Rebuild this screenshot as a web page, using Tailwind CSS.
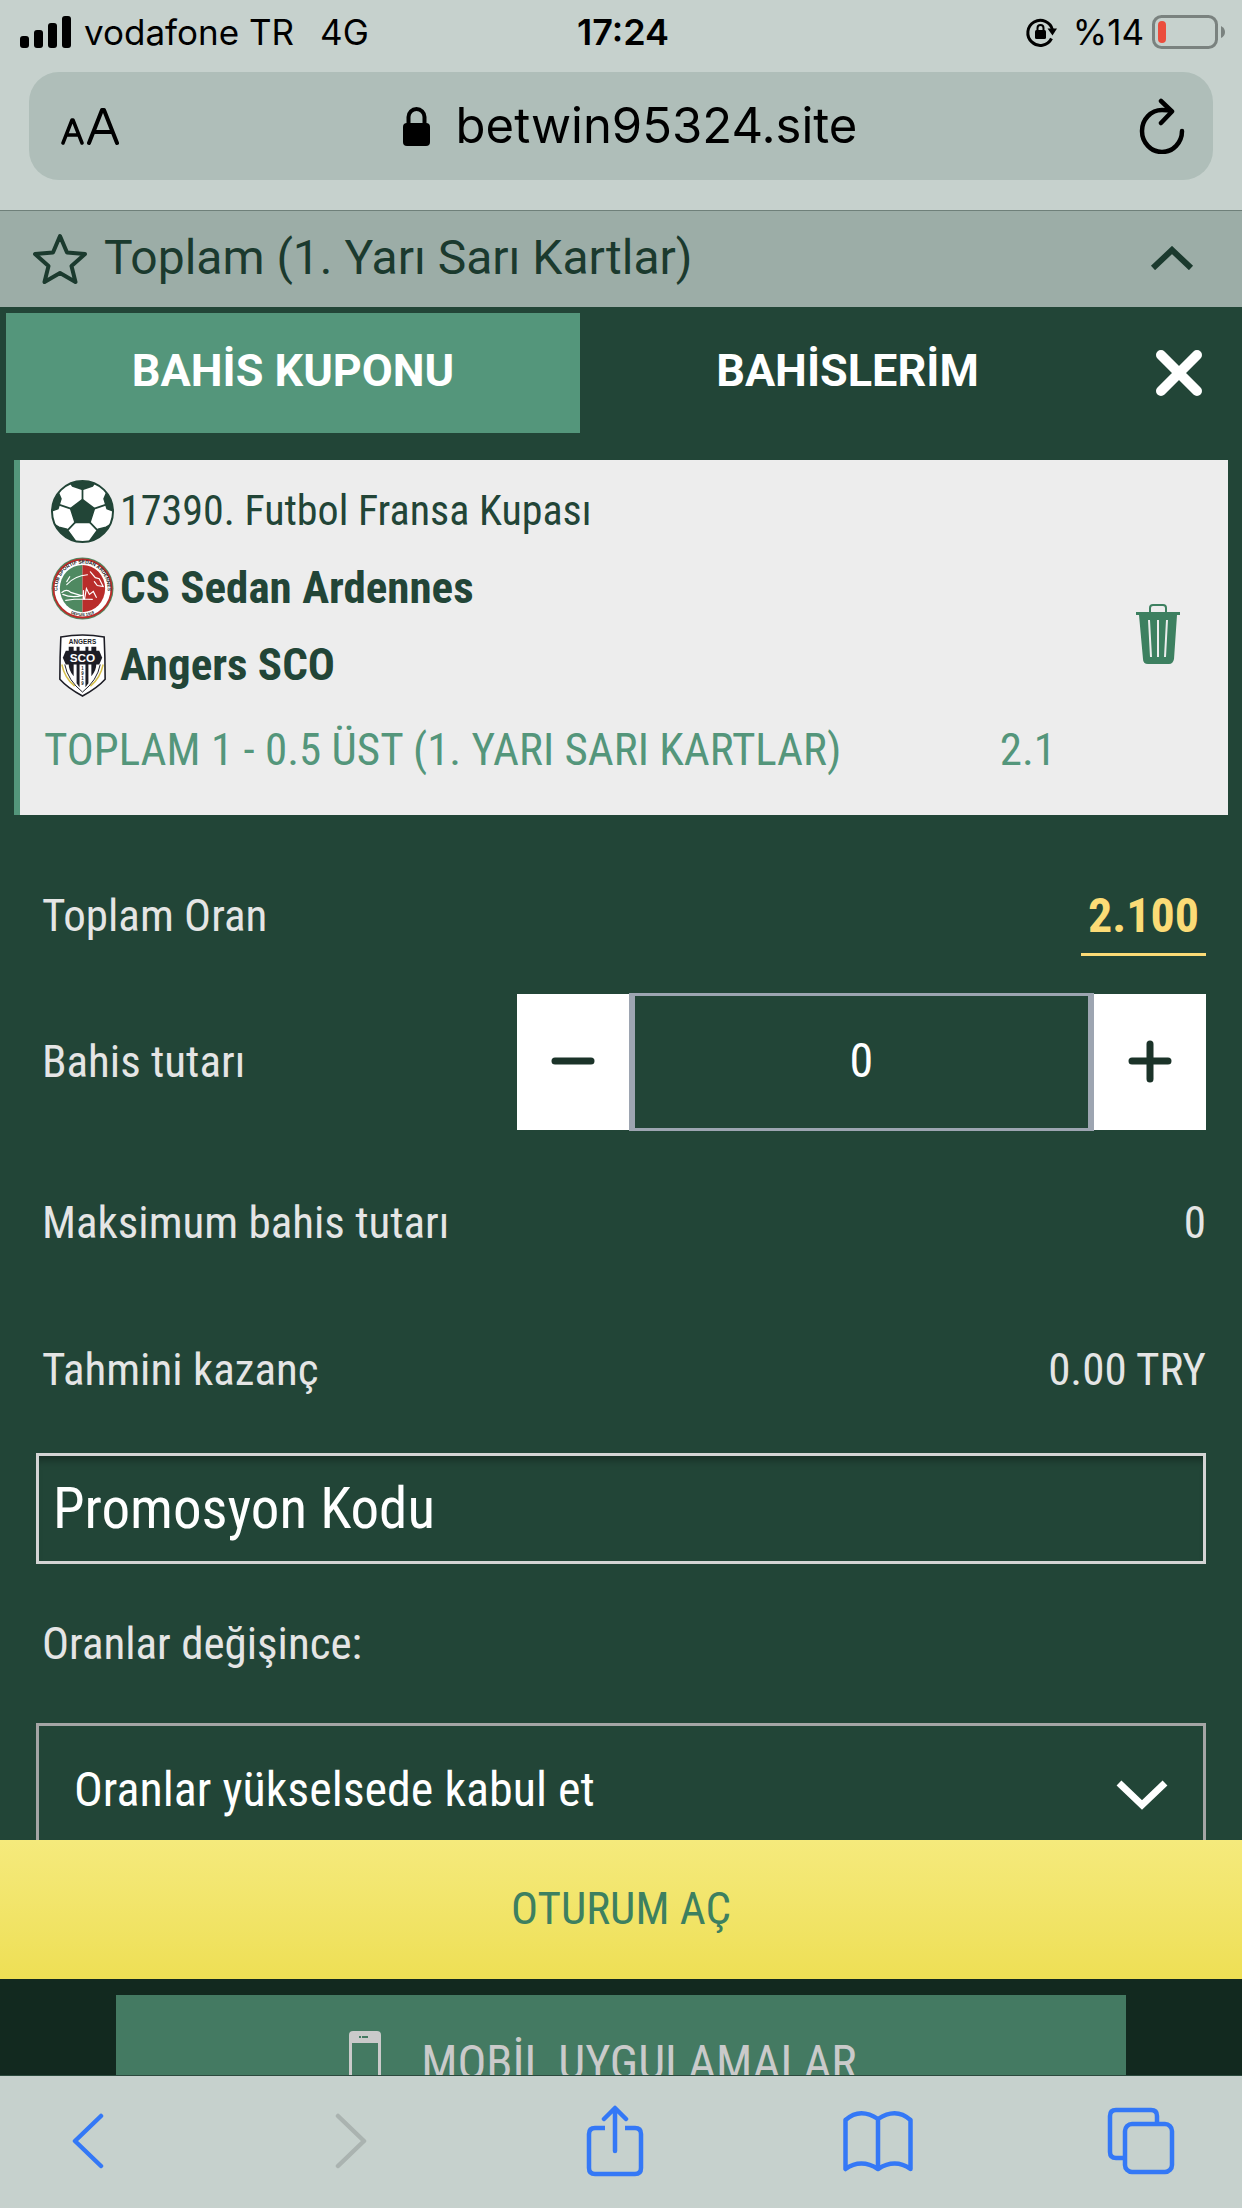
<!DOCTYPE html>
<html lang="tr">
<head>
<meta charset="utf-8">
<meta name="viewport" content="width=device-width, initial-scale=1">
<title>Bahis Kuponu</title>
<script src="https://cdn.jsdelivr.net/npm/@tailwindcss/browser@4"></script>
</head>
<body class="flex h-screen flex-col overflow-hidden bg-[#12291f] font-['Roboto_Condensed','Roboto',sans-serif] text-[45px] leading-[60px]">

<!-- Browser chrome: status and address bar -->
<header class="shrink-0 border-b border-[#6f807a] bg-[#c6d1cd] font-['Inter',sans-serif] text-black">
  <div class="grid h-[72px] grid-cols-3 items-center pr-4 pl-5 pb-2 text-[35px] leading-[44px]">
    <div class="flex items-center gap-[12px] whitespace-nowrap">
      <svg class="h-8 w-[52px]" viewBox="0 0 52 32" aria-hidden="true"><rect y="20" width="9" height="12" rx="3"/><rect x="14" y="14" width="9" height="18" rx="3"/><rect x="28" y="7" width="9" height="25" rx="3"/><rect x="42" width="9" height="32" rx="3"/></svg>
      <span>vodafone TR</span><span class="pl-[14px]">4G</span>
    </div>
    <time class="text-center text-[36px] font-semibold">17:24</time>
    <div class="flex items-center justify-end">
      <svg class="mr-4 h-8 w-8" viewBox="0 0 32 32" fill="none" stroke="#000" stroke-width="3" aria-hidden="true"><path d="M26.500 22.500A12.500 12.500 0 1 1 27.500 14"/><path d="M22.500 12.500h9.500l-4.500 7z" fill="#000" stroke="none"/><rect x="10" y="14" width="11" height="9" rx="1.500" fill="#000" stroke="none"/><path d="M12.500 15v-3a3 3 0 0 1 6 0v3" stroke-width="2"/></svg>
      <span class="mr-2">%14</span>
      <svg class="h-[34px] w-[74px]" viewBox="0 0 74 34" aria-hidden="true"><rect x="1.500" y="1.500" width="63" height="31" rx="8" fill="none" stroke="#7a827f" stroke-width="3"/><rect x="6" y="6" width="8" height="22" rx="4" fill="#eb4d3d"/><path d="M69 11q4 2 4 6t-4 6z" fill="#7a827f"/></svg>
    </div>
  </div>
  <div class="mx-[29px] mb-[30px] flex h-[108px] items-center justify-between rounded-[30px] bg-[#afbeb9] pr-7 pl-8">
    <button class="flex w-[60px] items-baseline" aria-label="Metin boyutu"><svg class="h-[38px] w-[58px]" viewBox="0 0 58 38" fill="none" stroke="#000" stroke-linecap="round" stroke-linejoin="round" aria-hidden="true"><path d="M2 36 11 13h1l9 23M5 28h13" stroke-width="3.500"/><path d="M28 36 41 3h2l13 33M32.500 25h19" stroke-width="4"/></svg></button>
    <div class="flex items-center gap-[26px] text-[49px]">
      <svg class="h-[39px] w-[27px]" viewBox="0 0 27 39" aria-hidden="true"><rect y="16" width="27" height="23" rx="4"/><path d="M5.500 18v-8a8 8 0 0 1 16 0v8" fill="none" stroke="#000" stroke-width="4"/></svg>
      <span>betwin95324.site</span>
    </div>
    <button class="flex w-[46px] justify-center" aria-label="Yenile"><svg class="h-14 w-[46px]" viewBox="0 0 46 56" fill="none" stroke="#000" stroke-width="4.500" stroke-linecap="round" stroke-linejoin="round" aria-hidden="true"><path d="M43 33a20 21 0 1 1-20-21c4 0 7 .3 9 1"/><path d="M22 3 33 13.500 22 25"/></svg></button>
  </div>
</header>

<!-- Market group heading of the page below the coupon -->
<section class="flex h-24 shrink-0 items-center justify-between bg-[#9cada7] pr-12 pb-[2px] pl-[33px] text-[#1b3a2e]">
  <h2 class="flex items-center gap-[17px] font-['Roboto',sans-serif] text-[48px]">
    <svg class="h-[52px] w-[54px]" viewBox="0 0 54 52" fill="none" stroke="currentColor" stroke-width="4" stroke-linejoin="round" aria-hidden="true"><path d="m27 4 7 16.500 18 1.500-13.500 12 4 16L27 41 11.500 50l4-16L2 22l18-1.500z"/></svg>
    <span>Toplam (1. Yarı Sarı Kartlar)</span>
  </h2>
  <button aria-label="Daralt"><svg class="h-6 w-11" viewBox="0 0 44 24" fill="none" stroke="currentColor" stroke-width="6" aria-hidden="true"><path d="m3 22 19-18 19 18"/></svg></button>
</section>

<!-- Bet coupon -->
<main class="min-h-0 flex-1 overflow-hidden bg-[#224537] text-[#e5e5e5]">
  <nav class="flex h-[126px] items-stretch pt-[6px] pl-[6px] font-['Roboto',sans-serif] font-bold text-white">
    <button class="flex-[574] bg-[#54967b] pb-1">BAHİS KUPONU</button>
    <button class="flex-[535] pb-1">BAHİSLERİM</button>
    <div class="flex flex-[127] items-center justify-center"><button aria-label="Kapat"><svg class="size-12" viewBox="0 0 48 48" fill="none" stroke="#fff" stroke-width="10" stroke-linecap="round" aria-hidden="true"><path d="m6 6 36 36M42 6 6 42"/></svg></button></div>
  </nav>

  <article class="mx-[14px] mt-[27px] flex items-center border-l-[6px] border-[#54967b] bg-[#ededed] pt-5 pr-12 pb-[35px] text-[#224537]">
    <div class="flex flex-1 flex-col gap-[14px] pl-[31px]">
      <div class="flex items-center gap-[6px] text-[42px]">
        <svg class="size-[63px]" viewBox="0 0 64 64" aria-hidden="true">
          <defs><clipPath id="ball"><circle cx="32" cy="32" r="31"/></clipPath></defs>
          <circle cx="32" cy="32" r="31" fill="#fff"/>
          <g clip-path="url(#ball)" fill="#224537" stroke="#224537" stroke-width="1.800"><path d="m32 20 12 9-4.500 14h-15L20 29z"/><path d="M19 2h26l-3 4-10 3.500L22 6zM57 12l8 20-8-3-3-10zM7 12-1 32l8-3 3-10zM63 44 48 62l-8-1 8-11 8-2zM1 44l15 18 8-1-8-11-8-2z"/><path d="M32 20V9M44 29l12-4M39.500 43l7.500 8M24.500 43 17 51M20 29 8 25" fill="none"/></g>
          <circle cx="32" cy="32" r="31" fill="none" stroke="#224537" stroke-width="2"/>
        </svg>
        <span class="pb-[2px]">17390. Futbol Fransa Kupası</span>
      </div>
      <div class="flex items-center gap-[6px] font-bold">
        <svg class="size-[63px]" viewBox="0 0 64 64" aria-hidden="true">
          <defs><path id="arcTop" d="M7 37a25.500 25.500 0 1 1 50 0"/><path id="arcLow" d="M14 54q18 12 36 0"/></defs>
          <circle cx="32" cy="32" r="31.500" fill="#4f8961"/><circle cx="32" cy="32" r="29.500" fill="#fff" stroke="#b92d2b" stroke-width="2"/>
          <path d="M32 8a23 24 0 0 0 0 48z" fill="#4f8961"/><path d="M32 8a23 24 0 0 1 0 48z" fill="#b92d2b"/>
          <g fill="none" stroke="#fff" stroke-width="1.200" stroke-linecap="round"><path d="M16 28q8-9 21-10M11 36q5-4 9 0l10 3M12 38q9 4 20 1M15 44q13-2 27-1M40 15l5 6 4 1 4 8-6-1-3-4M34 43l2-11 3 6 4-3 3 6M19 20l-3 5M33 34v9"/></g>
          <text font-family="Liberation Sans" font-size="5" font-weight="700" fill="#222"><textPath href="#arcTop" startOffset="50%" text-anchor="middle">CLUB SPORTIF SEDAN ARDENNES</textPath></text>
          <text font-family="Liberation Sans" font-size="4" font-weight="700" fill="#222"><textPath href="#arcLow" startOffset="50%" text-anchor="middle">DEPUIS 1919</textPath></text>
        </svg>
        <span class="pb-[2px]">CS Sedan Ardennes</span>
      </div>
      <div class="flex items-center gap-[6px] font-bold">
        <svg class="size-[63px]" viewBox="0 0 64 64" aria-hidden="true">
          <path d="M10 3q22-4 44 0 1 20 1 43-8 9-23 17-15-8-23-17Q9 23 10 3z" fill="#fff" stroke="#1d1d25" stroke-width="1.600"/>
          <path d="M18 13h5v30q-5-6-5-12zM26 13h3v41l-3-4zM35 13h3v37l-3 4zM41 13h5v18q0 6-5 12z" fill="#1d1d25"/>
          <path d="M32 59Q17 47 14 31m18 28q15-12 18-28" fill="none" stroke="#1d1d25"/><path d="M11 31q3 14 13 22m29-22q-3 14-13 22" fill="none" stroke="#d6bf4a" stroke-width="1.500"/>
          <path d="M15 17h34l3 7-3 7H15l-3-7z" fill="#1d1d25"/>
          <text x="32" y="10" font-family="Liberation Sans" font-size="6.500" text-anchor="middle" fill="#1d1d25">ANGERS</text>
          <text x="32" y="28.500" font-family="Liberation Sans" font-size="12" font-weight="700" text-anchor="middle" fill="#fff">SCO</text>
          <g font-family="Liberation Sans" font-size="4.500" text-anchor="middle" fill="#1d1d25"><text x="32" y="37">1</text><text x="32" y="42">9</text><text x="32" y="47">1</text><text x="32" y="52">9</text></g>
        </svg>
        <span class="pb-[2px]">Angers SCO</span>
      </div>
      <div class="mt-[9px] -ml-[7px] flex justify-between text-[#54967b]">
        <span>TOPLAM 1 - 0.5 ÜST (1. YARI SARI KARTLAR)</span><span>2.1</span>
      </div>
    </div>
    <button class="pt-2 pl-20" aria-label="Bahsi sil"><svg class="h-15 w-11" viewBox="0 0 44 60" aria-hidden="true"><path d="M0 8h44v3h-3l-3 44q-1 5-5 5H12q-5 0-5-5L3 11H0z" fill="#3d8060"/><path d="M14 9V4q0-3 3-3h10q3 0 3 3v5" fill="none" stroke="#3d8060" stroke-width="2"/><path d="m13 16 2 37M22 16v37M31 16l-2 37" stroke="#ededed" stroke-width="2"/></svg></button>
  </article>

  <form class="pt-[73px] pr-9 pl-9">
    <div class="flex items-start justify-between pl-[6px]">
      <span class="leading-[56px]">Toplam Oran</span>
      <strong class="border-b-3 border-[#fbdb76] px-[7px] pb-[9px] text-[48px] leading-[56px] font-bold text-[#fbdb76]">2.100</strong>
    </div>
    <div class="mt-[37px] flex h-[138px] items-center pl-[6px]">
      <label for="stake" class="flex-1">Bahis tutarı</label>
      <div class="flex h-full w-[59.2%] items-center">
        <button type="button" class="flex h-[136px] w-28 items-center justify-center bg-white" aria-label="Azalt"><svg class="size-11" viewBox="0 0 44 44" fill="none" stroke="#1b3329" stroke-width="7" stroke-linecap="round" aria-hidden="true"><path d="M4 21h36"/></svg></button>
        <input id="stake" type="text" value="0" class="h-full w-0 flex-1 border-x-[6px] border-y-3 border-[#9da5b1] bg-transparent pb-1 text-center text-[48px] text-white">
        <button type="button" class="flex h-[136px] w-28 items-center justify-center bg-white" aria-label="Artır"><svg class="size-11" viewBox="0 0 44 44" fill="none" stroke="#1b3329" stroke-width="7" stroke-linecap="round" aria-hidden="true"><path d="M4 21h36M22 4v35"/></svg></button>
      </div>
    </div>
    <div class="mt-[18px] flex h-[147px] items-center justify-between pl-[6px]"><span>Maksimum bahis tutarı</span><span>0</span></div>
    <div class="flex h-[147px] items-center justify-between pl-[6px]"><span>Tahmini kazanç</span><span>0.00 TRY</span></div>
    <input type="text" aria-label="Promosyon Kodu" placeholder="Promosyon Kodu" class="mt-[10px] block h-[111px] w-full border-3 border-[#d4d4d4] bg-transparent px-[14px] text-[57px] text-white shadow-[inset_0_10px_8px_-6px_rgba(0,0,0,0.35)] placeholder:text-white">
    <label for="odds" class="mt-[50px] block pl-[6px]">Oranlar değişince:</label>
    <div class="relative mt-[49px]">
      <select id="odds" class="block h-[134px] w-full appearance-none border-3 border-[#a5a5a5] bg-transparent px-[35px] text-[48px] text-white"><option>Oranlar yükselsede kabul et</option></select>
      <svg class="pointer-events-none absolute top-[57px] right-[38px] h-[30px] w-[52px]" viewBox="0 0 52 30" fill="none" stroke="#fff" stroke-width="7" aria-hidden="true"><path d="m3 3 23 22L49 3"/></svg>
    </div>
  </form>
</main>

<button class="h-[139px] shrink-0 bg-linear-to-b from-[#f5ea7c] to-[#eedf54] pb-[2px] text-[#3d8060]">OTURUM AÇ</button>

<!-- Visible top of the page footer -->
<footer class="h-24 shrink-0 overflow-hidden pt-4">
  <a href="#" class="mx-auto flex h-34 w-[1010px] max-w-[82%] items-center justify-center gap-10 bg-[#447a62] pr-9 text-[48px] text-[#cacaca]">
    <svg class="h-16 w-8" viewBox="0 0 32 64" aria-hidden="true"><path fill-rule="evenodd" d="M4 0h24q4 0 4 4v56q0 4-4 4H4q-4 0-4-4V4q0-4 4-4zM3 12v40h26V12zM10 5v2h2V5zm3 0v2h6V5z" fill="currentColor"/></svg>
    <span>MOBİL UYGULAMALAR</span>
  </a>
</footer>

<!-- Browser toolbar -->
<nav class="flex h-[133px] shrink-0 items-center justify-between border-t border-[#2c4a3e] bg-[#c6d1cd] pr-[66px] pb-[2px] pl-[53px] *:flex *:w-[70px] *:justify-center">
  <button aria-label="Geri"><svg class="h-14 w-8" viewBox="0 0 32 56" fill="none" stroke="#3478f6" stroke-width="4.500" stroke-linecap="round" stroke-linejoin="round" aria-hidden="true"><path d="M29 3 3 28l26 25"/></svg></button>
  <button aria-label="İleri" disabled><svg class="h-14 w-8" viewBox="0 0 32 56" fill="none" stroke="#aab3b0" stroke-width="4.500" stroke-linecap="round" stroke-linejoin="round" aria-hidden="true"><path d="m3 3 26 25L3 53"/></svg></button>
  <button aria-label="Paylaş"><svg class="h-[72px] w-[58px]" viewBox="0 0 58 72" fill="none" stroke="#3478f6" stroke-width="4.500" aria-hidden="true"><path d="M19 23H9q-6 0-6 6v34q0 6 6 6h40q6 0 6-6V29q0-6-6-6H39"/><path d="M29 46V4M18 14 29 3l11 11" stroke-linecap="round" stroke-linejoin="round"/></svg></button>
  <button aria-label="Yer imleri"><svg class="h-[62px] w-[70px]" viewBox="0 0 70 62" fill="none" stroke="#3478f6" stroke-width="4.500" stroke-linejoin="round" aria-hidden="true"><path d="M2.500 10Q17-3 35 9q18-12 32.500 1v49Q52 48 35 59 18 48 2.500 59zM35 9v50"/></svg></button>
  <button aria-label="Sekmeler"><svg class="h-[68px] w-[68px]" viewBox="0 0 68 68" fill="none" stroke="#3478f6" stroke-width="4.500" aria-hidden="true"><path d="M17 51h-8q-6 0-6-6V9q0-6 6-6h35q6 0 6 6v8"/><rect x="18" y="17" width="47" height="48" rx="7"/></svg></button>
</nav>
</body>
</html>
